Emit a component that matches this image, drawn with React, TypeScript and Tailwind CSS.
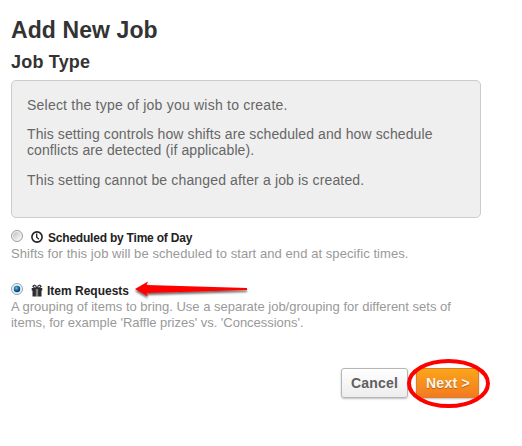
import type { ReactNode } from "react"

function ClockIcon() {
  return (
    <svg width="12" height="12" viewBox="0 0 12 12" fill="none" stroke="#222" strokeWidth="1.6">
      <circle cx="6" cy="6" r="5.1" />
      <path d="M5.7 2.6v3.6l2.2 2" strokeWidth="1.3" />
    </svg>
  )
}

function GiftIcon() {
  return (
    <svg width="12" height="13" viewBox="0 0 12 13" fill="#2b2b2b">
      <path d="M.7 4h4.2v2.6H.7zM7.1 4h4.2v2.6H7.1zM1.5 6.6h3.4v6H1.5zM7.1 6.6h3.4v6H7.1z" />
      <path d="M4.9 4h2.2v8.6H4.9z" opacity=".6" />
      <path d="M5.6 4.2 4.9 2 3.2 1.1 1.9 2.2l1.4 1.5zM6.4 4.2 7.1 2l1.7-.9 1.3 1.1-1.4 1.5z" fill="none" stroke="#2b2b2b" strokeWidth="1.1" />
    </svg>
  )
}

function Radio({ checked = false }: { checked?: boolean }) {
  return (
    <svg className="relative -top-[2px]" width="12" height="12" viewBox="0 0 12 12" role="radio" aria-checked={checked}>
      <defs>
        <linearGradient id="radio-face" x1="0" y1="0" x2="1" y2="1">
          <stop offset="0" stopColor="#bfc3c6" />
          <stop offset="1" stopColor="#fafafa" />
        </linearGradient>
        <radialGradient id="radio-dot" cx=".4" cy=".35" r=".7">
          <stop offset="0" stopColor="#6fd0f5" />
          <stop offset=".45" stopColor="#1c6fa6" />
          <stop offset="1" stopColor="#0b2d4e" />
        </radialGradient>
      </defs>
      <circle cx="6" cy="6" r="5.5" fill="#f4f4f4" stroke={checked ? "#8ba3b5" : "#9a9b9b"} />
      <circle cx="6" cy="6" r="4" fill={checked ? "#d5edf8" : "url(#radio-face)"} />
      {checked && <circle cx="6" cy="6" r="3.2" fill="url(#radio-dot)" />}
    </svg>
  )
}

type JobOptionProps = {
  icon: ReactNode
  label: ReactNode
  checked?: boolean
  children: ReactNode
}

function JobOption({ icon, label, checked, children }: JobOptionProps) {
  return (
    <div>
      <div className="flex h-4 items-center text-[12px] leading-4 font-bold text-[#222]">
        <Radio checked={checked} />
        <span className="relative -top-px ml-2 flex w-3 justify-center">{icon}</span>
        {label}
      </div>
      <div className="text-[13px] leading-4 text-[#999]">{children}</div>
    </div>
  )
}

// Red pointer next to the selected option
function Arrow() {
  return (
    <svg className="absolute left-[133px] top-[279px]" width="120" height="22" viewBox="0 0 120 22">
      <defs>
        <filter id="arrow-shadow" x="-10%" y="-30%" width="120%" height="180%">
          <feDropShadow dx="0" dy="2" stdDeviation="1" floodColor="#000" floodOpacity=".6" />
        </filter>
      </defs>
      <path d="M2 10 15 2.5 13.5 6 114 9v2L13.5 14 15 17.5z" fill="#f00" filter="url(#arrow-shadow)" />
    </svg>
  )
}

export default function App() {
  return (
    <main className="relative h-[446px] w-[522px] overflow-hidden whitespace-nowrap bg-white pl-[11px] pt-[16px] font-['Liberation_Sans',Arial,sans-serif]">
      <h1 className="text-[23px] leading-7 font-bold tracking-[0.1px] text-[#333]">Add New Job</h1>
      <h2 className="mt-[7px] text-[18px] leading-[22px] font-bold tracking-[0.2px] text-[#333]">Job Type</h2>

      <section className="mt-[7px] h-[138px] w-[470px] rounded-[5px] border border-[#ccc] bg-[#efefef] px-[15px] pt-4 text-[14px] leading-4 text-[#666]">
        <p className="tracking-[0.22px]">Select the type of job you wish to create.</p>
        <p className="mt-[13px] tracking-[0.1px]">
          This setting controls how shifts are scheduled and how schedule
          <br />
          conflicts are detected (if applicable).
        </p>
        <p className="mt-[14px] tracking-[0.15px]">This setting cannot be changed after a job is created.</p>
      </section>

      <div className="mt-3 flex flex-col gap-[21px]">
        <JobOption icon={<ClockIcon />} label={<span className="ml-[5px] tracking-[-0.21px]">Scheduled by Time of Day</span>}>
          <span className="tracking-[0.07px]">
            Shifts for this job will be scheduled to start and end at specific times.
          </span>
        </JobOption>
        <JobOption checked icon={<GiftIcon />} label={<span className="ml-1">Item Requests</span>}>
          A grouping of items to bring. Use a separate job/grouping for different sets of
          <br />
          <span className="tracking-[-0.02px]">items, for example 'Raffle prizes' vs. 'Concessions'.</span>
        </JobOption>
      </div>

      <div className="mt-[37px] ml-[330px] flex gap-2 text-[14px] font-bold">
        <button className="h-[30px] w-[67px] rounded-[3px] border border-[#b5b5b5] bg-linear-to-b from-white to-[#ededed] tracking-[0.2px] text-[#606060] shadow-[0_1px_2px_rgba(0,0,0,0.25)]">
          Cancel
        </button>
        <button className="h-[30px] w-[63px] rounded-[2px] border border-[#d9802b] bg-linear-to-b from-[#faa51a] to-[#f47a20] pl-px tracking-[0.3px] text-[#fef4e9] shadow-[0_1px_2px_rgba(0,0,0,0.25)] [text-shadow:0_1px_1px_rgba(0,0,0,0.3)]">
          Next &gt;
        </button>
      </div>

      <Arrow />
      <svg className="absolute left-[406px] top-[358px]" width="86" height="52" fill="none">
        <ellipse cx="42.5" cy="25.5" rx="39.5" ry="22.6" stroke="#f00" strokeWidth="4" />
      </svg>
    </main>
  )
}
